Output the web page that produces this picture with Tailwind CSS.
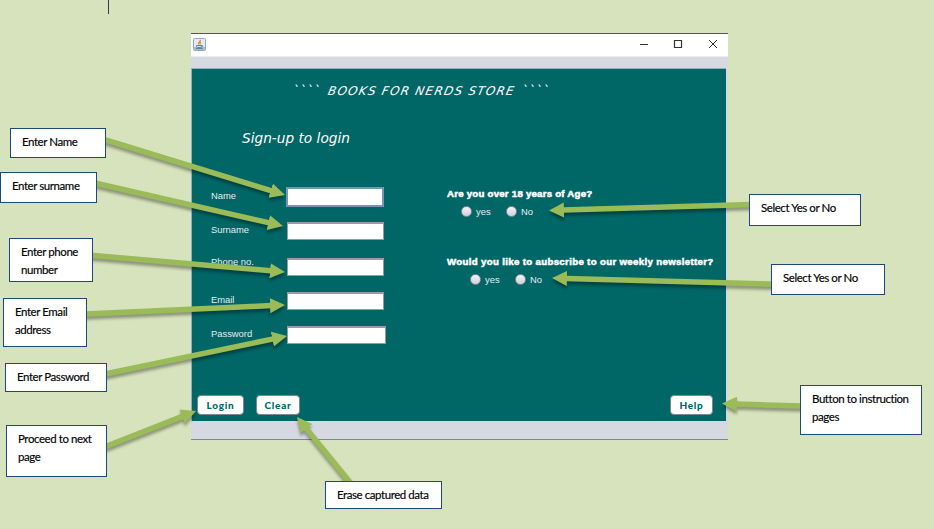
<!DOCTYPE html>
<html lang="en">
<head>
<meta charset="utf-8">
<title>Books for Nerds Store</title>
<script src="https://cdn.jsdelivr.net/npm/@tailwindcss/browser@4"></script>
</head>
<body class="bg-[#d7e3bc]">
<main class="relative w-[934px] h-[529px] overflow-hidden bg-[#d7e3bc] font-['Liberation_Sans',sans-serif]">
  <div class="absolute left-[108px] top-0 w-px h-[14px] bg-[#3f3151]"></div>

  <!-- Application window -->
  <section class="absolute left-[191px] top-[33px] w-[537px] h-[407px] flex flex-col bg-[#d6d9e2] border-t border-b border-t-[#555555] border-b-[#85858e]">
    <header class="h-[23px] shrink-0 bg-white border-b border-[#ebebef] flex items-center justify-between pl-[2px] pr-[10px]">
      <svg class="w-[13px] h-[13px] mb-[2px]" viewBox="0 0 13 13" fill="none">
        <rect x=".5" y=".5" width="12" height="12" rx="1" fill="#e3ebf1" stroke="#93a9b9"/>
        <path d="M1 9h11v3H1z" fill="#a9bccb"/>
        <path d="M7.300 2C7.800 3.700 4.500 4 5.600 6.500M8 4C6.500 4.500 7.600 5.500 6.800 6.500" stroke="#e8873a" stroke-width="1.300"/>
        <path d="M3.500 7.500h5v1.200c0 1-5 1-5 0zM8.500 7.600c2-.5 2 1.400 0 1.400M3 10.500h6.500" stroke="#58788f" stroke-width=".9"/>
      </svg>
      <svg class="w-[80px] h-[12px] mb-[2px]" viewBox="0 0 80 12" fill="none" stroke="#333" stroke-width="1">
        <path d="M2 6.500h8"/>
        <path d="M36.500 2.500h7v7h-7z" stroke-width="1.200"/>
        <path d="M71 2l8 8M79 2l-8 8"/>
      </svg>
    </header>
    <div class="h-[11px] shrink-0"></div>
    <div class="w-[535px] h-[353px] shrink-0 bg-[#006666] border-t border-l border-[#8fb0b8] flex flex-col text-white">
      <h1 class="h-[44px] pl-[101px] leading-[44px] text-[12px] font-['DejaVu_Sans',sans-serif] whitespace-nowrap flex"><span class="tracking-[1px] w-[35px] italic">````</span><span class="inline-block -skew-x-12 italic tracking-[1.25px] w-[194px]">BOOKS FOR NERDS STORE</span><span class="tracking-[1px] italic">````</span></h1>
      <h2 class="h-[51px] pl-[50px] leading-[51px] text-[13.7px] italic font-['DejaVu_Sans',sans-serif] whitespace-nowrap">Sign-up to login</h2>
      <div class="flex h-[228px] shrink-0">
        <form class="w-[255px] pl-[19px] pt-[23px] text-[9.4px] text-[#e4efef]">
          <div class="flex h-[35px]"><label class="w-[75px] pt-[3px] leading-[11px]">Name</label><input aria-label="Name" class="w-[98px] h-[20px] bg-white border-2 border-[#7795b5]"></div>
          <div class="flex h-[36px]"><label class="w-[76px] pt-[2px] leading-[11px]">Surname</label><input aria-label="Surname" class="w-[97px] h-[18px] bg-white border border-t-2 border-[#969ca0]"></div>
          <div class="flex h-[34px]"><label class="w-[76px] -mt-[2px] leading-[11px]">Phone no.</label><input aria-label="Phone" class="w-[97px] h-[18px] bg-white border border-t-2 border-[#969ca0]"></div>
          <div class="flex h-[34px]"><label class="w-[76px] pt-[2px] leading-[11px]">Email</label><input aria-label="Email" class="w-[97px] h-[18px] bg-white border border-t-2 border-[#969ca0]"></div>
          <div class="flex h-[34px]"><label class="w-[76px] pt-[2px] leading-[11px]">Password</label><input aria-label="Password" type="password" class="w-[99px] h-[18px] bg-white border border-t-2 border-[#969ca0]"></div>
        </form>
        <div class="flex-1 pt-[23px] text-[9.4px] text-[#e4efef] whitespace-nowrap">
          <p class="h-[19px] leading-[14px] text-[9.7px] font-bold text-white tracking-[0.22px] [-webkit-text-stroke:0.5px_white]">Are you over 18 years of Age?</p>
          <div class="flex h-[49px] items-start pl-[14px] leading-[11px]">
            <i class="w-[11px] h-[11px] rounded-full border border-[#8a8a98] bg-linear-to-b from-[#f4f4f8] to-[#cfd1dc]"></i><span class="w-[30px] ml-[4px]">yes</span>
            <i class="w-[11px] h-[11px] rounded-full border border-[#8a8a98] bg-linear-to-b from-[#f4f4f8] to-[#cfd1dc]"></i><span class="ml-[4px]">No</span>
          </div>
          <p class="h-[19px] leading-[14px] text-[9.7px] font-bold text-white tracking-[0.32px] [-webkit-text-stroke:0.5px_white]">Would you like to aubscribe to our weekly newsletter?</p>
          <div class="flex items-start pl-[23px] leading-[11px]">
            <i class="w-[11px] h-[11px] rounded-full border border-[#8a8a98] bg-linear-to-b from-[#f4f4f8] to-[#cfd1dc]"></i><span class="w-[30px] ml-[4px]">yes</span>
            <i class="w-[11px] h-[11px] rounded-full border border-[#8a8a98] bg-linear-to-b from-[#f4f4f8] to-[#cfd1dc]"></i><span class="ml-[4px]">No</span>
          </div>
        </div>
      </div>
      <div class="flex mt-[3px] pl-[5px] pr-[13px] font-['Lato',sans-serif] font-black text-[10px] tracking-[0.7px] text-[#006666]">
        <button class="w-[47px] h-[20px] rounded-[4px] border border-[#7c8791] bg-white leading-[18px]">Login</button>
        <button class="w-[44px] h-[20px] ml-[12px] rounded-[4px] border border-[#7c8791] bg-white leading-[18px]">Clear</button>
        <button class="w-[43px] h-[20px] ml-auto rounded-[4px] border border-[#7c8791] bg-white leading-[18px]">Help</button>
      </div>
    </div>
  </section>

  <!-- Callout arrows -->
  <svg class="absolute inset-0 w-[934px] h-[529px]" viewBox="0 0 934 529">
    <defs>
      <marker id="head" markerUnits="userSpaceOnUse" markerWidth="16" markerHeight="16" refX="1" refY="8" orient="auto"><path d="M0 .5L15 8L0 15.500z" fill="#9bbb59"/></marker>
      <filter id="shade" filterUnits="userSpaceOnUse" x="0" y="0" width="934" height="529" color-interpolation-filters="sRGB"><feDropShadow dx="0" dy="3" stdDeviation="1.500" flood-color="#000" flood-opacity=".35"/></filter>
    </defs>
    <g stroke="#9bbb59" stroke-width="5.500" filter="url(#shade)">
      <path marker-end="url(#head)" d="M104 139.400L271.600 190.900"/>
      <path marker-end="url(#head)" d="M95 183L269.300 222.900"/>
      <path marker-end="url(#head)" d="M91 255.300L271 270.800"/>
      <path marker-end="url(#head)" d="M85 314.100L271 305.600"/>
      <path marker-end="url(#head)" d="M105 374L273.300 338.900"/>
      <path marker-end="url(#head)" d="M105 446.800L183 416.100"/>
      <path marker-end="url(#head)" d="M351 483.500L305.800 427.900"/>
      <path marker-end="url(#head)" d="M802 406.100L736 404"/>
      <path marker-end="url(#head)" d="M751 204.400L563 210.100"/>
      <path marker-end="url(#head)" d="M773 284.100L566 278.400"/>
    </g>
  </svg>

  <!-- Callout boxes -->
  <div class="font-['Lato',sans-serif] text-[11.5px] leading-[18px] tracking-[-0.43px] [-webkit-text-stroke:0.15px_black] text-black whitespace-nowrap">
    <div class="absolute left-[10px] top-[128px] w-[96px] h-[30px] pl-[11px] pt-[4px] bg-white border border-[#1f497d]">Enter Name</div>
    <div class="absolute left-0 top-[172px] w-[97px] h-[31px] pl-[11px] pt-[4px] bg-white border border-[#1f497d]">Enter surname</div>
    <div class="absolute left-[9px] top-[238px] w-[84px] h-[44px] pl-[11px] pt-[4px] bg-white border border-[#1f497d]">Enter phone<br>number</div>
    <div class="absolute left-[3px] top-[298px] w-[84px] h-[49px] pl-[11px] pt-[4px] bg-white border border-[#1f497d]">Enter Email<br>address</div>
    <div class="absolute left-[5px] top-[363px] w-[102px] h-[29px] pl-[11px] pt-[4px] bg-white border border-[#1f497d]">Enter Password</div>
    <div class="absolute left-[6px] top-[425px] w-[101px] h-[52px] pl-[11px] pt-[4px] bg-white border border-[#1f497d]">Proceed to next<br>page</div>
    <div class="absolute left-[325px] top-[481px] w-[117px] h-[28px] pl-[11px] pt-[4px] bg-white border border-[#1f497d]">Erase captured data</div>
    <div class="absolute left-[749px] top-[194px] w-[112px] h-[32px] pl-[11px] pt-[4px] bg-white border border-[#1f497d]">Select Yes or No</div>
    <div class="absolute left-[771px] top-[264px] w-[114px] h-[31px] pl-[11px] pt-[4px] bg-white border border-[#1f497d]">Select Yes or No</div>
    <div class="absolute left-[800px] top-[385px] w-[122px] h-[50px] pl-[11px] pt-[4px] bg-white border border-[#1f497d]">Button to instruction<br>pages</div>
  </div>
</main>
</body>
</html>
